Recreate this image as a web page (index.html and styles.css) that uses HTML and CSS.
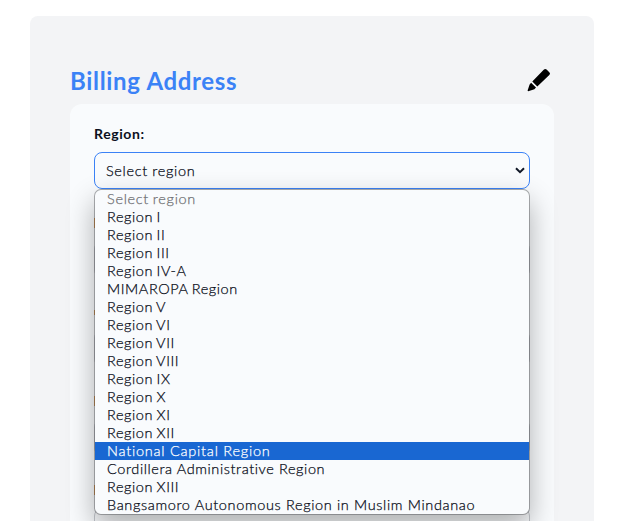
FILE: index.html
```html
<!DOCTYPE html>
<html lang="en">
<head>
<meta charset="utf-8">
<title>Billing Address</title>
<link rel="stylesheet" href="styles.css">
</head>
<body>
<main class="card">
  <header class="head">
    <h1>Billing Address</h1>
    <svg class="pencil" viewBox="0 0 24 24"><path d="M16.7 1.7 Q18.2 .2 19.6 1.5 L22.5 4.4 Q23.7 5.7 22.3 7.1 L10.3 18.4 L5.3 13.5ZM4.1 14.8 L9 19.6 L7.4 21.2 L1.2 23.2 Q.4 23.2 .7 22.3 L2.6 16.4Z"/></svg>
  </header>
  <form class="panel">
    <div class="field">
      <span class="label">Region:</span>
      <div class="select">
        <span>Select region</span>
        <svg class="chevron" viewBox="0 0 10 7"><path d="M1 1.2 5 5.2 9 1.2"/></svg>
        <ul class="menu">
          <li class="placeholder">Select region</li>
          <li>Region I</li>
          <li>Region II</li>
          <li>Region III</li>
          <li>Region IV-A</li>
          <li class="caps">MIMAROPA Region</li>
          <li>Region V</li>
          <li>Region VI</li>
          <li>Region VII</li>
          <li>Region VIII</li>
          <li>Region IX</li>
          <li>Region X</li>
          <li>Region XI</li>
          <li>Region XII</li>
          <li class="active">National Capital Region</li>
          <li class="admin">Cordillera Administrative Region</li>
          <li>Region XIII</li>
          <li class="long">Bangsamoro Autonomous Region in Muslim Mindanao</li>
        </ul>
      </div>
    </div>
    <div class="field covered"><i class="edge"></i><div class="box"></div></div>
    <div class="field covered"><i class="edge short"></i><div class="box"></div></div>
    <div class="field covered"><i class="edge"></i><div class="box"></div></div>
    <div class="field covered"><i class="edge"></i><div class="box"></div></div>
  </form>
</main>
</body>
</html>
```
FILE: styles.css
```css
* { box-sizing: border-box; }
html { height: 521px; overflow: hidden; }
body {
  margin: 0;
  height: 521px;
  padding: 16px 0 0 30px;
  overflow: hidden;
  background: #fff;
  color: #111827;
  font: 14px/18px "Century Gothic", Lato, sans-serif;
}
.card {
  width: 564px;
  height: 505px;
  padding: 48px 40px 0;
  overflow: hidden;
  border-radius: 8px 8px 0 0;
  background: #f3f4f6;
}
.head {
  display: flex;
  justify-content: space-between;
  height: 40px;
}
h1 {
  margin: 0;
  color: #3b82f6;
  font-size: 24px;
  line-height: 34px;
  font-weight: 700;
  letter-spacing: .68px;
}
.pencil { width: 24px; height: 24px; margin: 4px 3px 0 0; fill: #000; }
.panel {
  height: 417px;
  padding: 20px 24px 0;
  border-radius: 12px 12px 0 0;
  background: #f9fbfd;
}
.field { height: 89px; }
.label {
  display: block;
  height: 28px;
  line-height: 20px;
  color: #0b1020;
  font-weight: 700;
  letter-spacing: .6px;
}
.select {
  position: relative;
  display: flex;
  align-items: center;
  justify-content: space-between;
  height: 37px;
  padding: 0 4px 0 11px;
  border: 1px solid #3b82f6;
  border-radius: 8px;
  background: #f9fbfd;
  color: #080c18;
  font-weight: 300;
  font-size: 14.5px;
  letter-spacing: .66px;
  -webkit-text-stroke: .25px currentColor;
}
.chevron { width: 10px; height: 7px; fill: none; stroke: #111827; stroke-width: 2; }
.menu {
  position: absolute;
  z-index: 1;
  top: 36px;
  left: -1px;
  width: 436px;
  height: 326px;
  margin: 0;
  padding: 0;
  overflow: hidden;
  list-style: none;
  border: 1px solid rgba(90, 92, 96, .5);
  border-radius: 7px;
  background: #f9fbfd;
  background-clip: padding-box;
  box-shadow: 0 12px 28px rgba(0, 0, 0, .3);
}
.menu li { height: 18px; padding-left: 12px; white-space: nowrap; letter-spacing: .55px; word-spacing: -.8px; }
.menu .placeholder { color: #707174; letter-spacing: .7px; }
.menu .caps { letter-spacing: .57px; }
.menu .admin { letter-spacing: .6px; word-spacing: 0; }
.menu .long { letter-spacing: .64px; word-spacing: 0; }
.menu .active { background: #1967d2; color: #fff; letter-spacing: .77px; word-spacing: 0; }
.covered { padding-top: 5px; }
.edge { display: block; width: 1px; height: 10px; margin-bottom: 13px; background: #e08a30; }
.short { height: 5px; margin: 3px 0 15px; }
.box { height: 37px; border: 1px solid #c5c8ce; border-radius: 8px; }
```
